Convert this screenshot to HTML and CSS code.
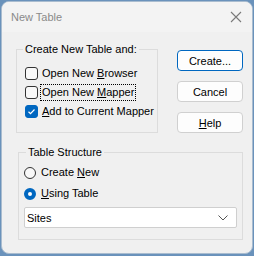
FILE: index.html
```html
<!DOCTYPE html>
<html>
<head>
<meta charset="utf-8">
<link rel="stylesheet" href="styles.css">
</head>
<body>
<div class="window">
  <div class="titlebar">
    <span class="title">New Table</span>
    <svg class="close" width="12" height="12" viewBox="0 0 12 12"><path d="M1 1 L11 11 M11 1 L1 11" stroke="#7a7a7a" stroke-width="1.1" fill="none"/></svg>
  </div>
  <div class="content">
    <div class="top">
      <fieldset class="group g1">
        <legend>Create New Table and:</legend>
        <div class="row"><span class="cb"></span><span class="lbl">Open New <u>B</u>rowser</span></div>
        <div class="row"><span class="cb"></span><span class="lbl focus">Open New <u>M</u>apper</span></div>
        <div class="row"><span class="cb on"><svg width="13" height="13" viewBox="0 0 13 13"><path d="M3.5 6.8 L5.5 8.7 L9.5 4.5" stroke="#fff" stroke-width="1.2" fill="none"/></svg></span><span class="lbl"><u>A</u>dd to Current Mapper</span></div>
      </fieldset>
      <div class="buttons">
        <div class="btn default">Create...</div>
        <div class="btn">Cancel</div>
        <div class="btn"><u>H</u>elp</div>
      </div>
    </div>
    <fieldset class="group g2">
      <legend>Table Structure</legend>
      <div class="row r"><span class="radio"></span><span class="lbl">Create <u>N</u>ew</span></div>
      <div class="row r"><span class="radio on"></span><span class="lbl"><u>U</u>sing Table</span></div>
      <div class="combo"><span>Sites</span><svg width="10" height="6" viewBox="0 0 10 6"><path d="M0.5 0.5 L5 5 L9.5 0.5" stroke="#555" stroke-width="1" fill="none"/></svg></div>
    </fieldset>
  </div>
</div>
</body>
</html>
```
FILE: styles.css
```css
html, body {
  margin: 0;
  padding: 0;
}
body {
  background: #6a92bb;
  padding: 1px 1px 2px 1px;
  height: 256px;
  box-sizing: border-box;
  font-family: "Liberation Sans", Arial, sans-serif;
  font-size: 11px;
  color: #000;
}
.window {
  width: 252px;
  height: 253px;
  box-sizing: border-box;
  background: #f0f0f0;
  border-radius: 8px;
  border: 1px solid #a9bccf;
  overflow: hidden;
}
.titlebar {
  height: 30px;
  background: #f3f3f3;
  display: flex;
  align-items: center;
  justify-content: space-between;
  padding: 0 10px 0 9px;
}
.title {
  color: #8a8a8a;
  font-size: 11px;
}
.close {
  display: block;
}
.content {
  padding: 9px 0 0 0;
}
.top {
  display: flex;
  align-items: flex-start;
}
.group {
  border: 1px solid #dcdcdc;
  box-sizing: border-box;
  min-width: 0;
}
.group legend {
  padding: 0 2px;
  line-height: 16px;
}
.g1 {
  margin: 0 0 0 14px;
  width: 142px;
  height: 92px;
  padding: 7px 0 0 8px;
}
.g1 legend {
  margin-left: -2px;
}
.row {
  display: flex;
  align-items: center;
  height: 19px;
}
.cb {
  width: 13px;
  height: 13px;
  box-sizing: border-box;
  border: 1px solid #333;
  border-radius: 3px;
  background: #f8f8f8;
  margin-right: 2px;
  flex: none;
}
.cb.on {
  background: #0067c0;
  border-color: #0067c0;
}
.cb.on svg {
  display: block;
  margin: -1px;
}
.lbl {
  padding: 0 1px;
  line-height: 15px;
  border: 1px solid transparent;
  white-space: nowrap;
}
.lbl.focus {
  border: 1px dotted #000;
}
.buttons {
  margin-left: 19px;
  margin-top: 9px;
  display: flex;
  flex-direction: column;
  gap: 10px;
}
.btn {
  width: 66px;
  height: 21px;
  box-sizing: border-box;
  border: 1px solid #d0d0d0;
  border-radius: 4px;
  background: #fdfdfd;
  display: flex;
  align-items: center;
  justify-content: center;
}
.btn.default {
  border: 1px solid #0067c0;
  box-shadow: inset 0 0 0 1px #fff;
}
.g2 {
  margin: 11px 0 0 16px;
  width: 225px;
  height: 96px;
  padding: 2px 5px 0 5px;
}
.g2 legend {
  margin-left: 2px;
}
.row.r {
  height: 21px;
}
.radio {
  width: 12px;
  height: 12px;
  box-sizing: border-box;
  border: 1px solid #333;
  border-radius: 50%;
  background: #f8f8f8;
  margin-right: 3px;
  flex: none;
}
.radio.on {
  border: 4px solid #0067c0;
  background: #fff;
}
.combo {
  margin-top: 3px;
  height: 21px;
  box-sizing: border-box;
  background: #fff;
  border: 1px solid #cfcfcf;
  border-radius: 2px;
  display: flex;
  align-items: center;
  justify-content: space-between;
  padding: 0 8px 0 2px;
}
.combo svg {
  display: block;
}
```
